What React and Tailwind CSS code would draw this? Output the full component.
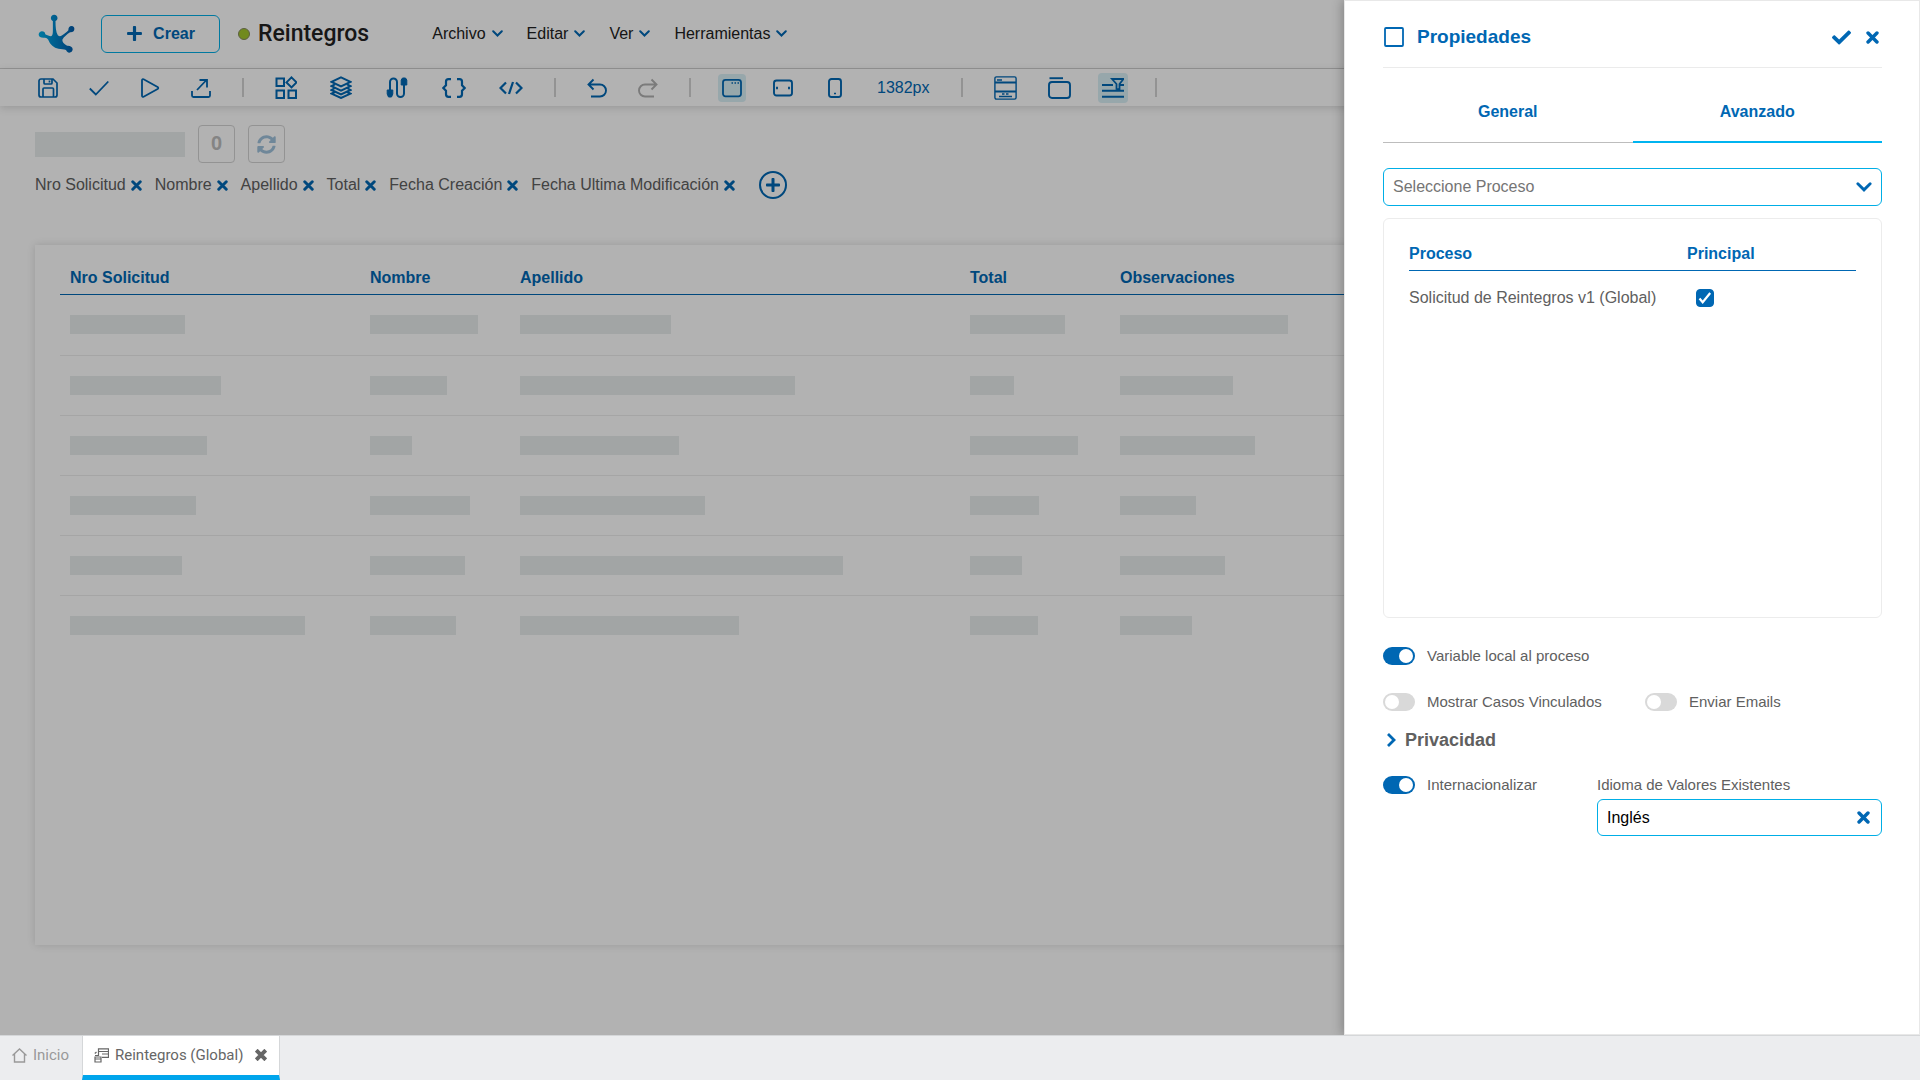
import React, { useState } from "react";
import { FaPlus, FaCheck, FaSyncAlt } from "react-icons/fa";

function Svg({ children, w = 20, h = 20, sw = 2, vb, className = "" }) {
  return (
    <svg
      width={w}
      height={h}
      viewBox={vb || `0 0 ${w} ${h}`}
      fill="none"
      stroke="currentColor"
      strokeWidth={sw}
      className={`block shrink-0 ${className}`}
      aria-hidden="true"
    >
      {children}
    </svg>
  );
}

const Cross = ({ size = 11 }) => (
  <Svg w={size} h={size} vb="0 0 12 12" sw={3.2}>
    <path d="M1.900 1.900l8.200 8.200M10.100 1.900l-8.200 8.200" strokeLinecap="round" />
  </Svg>
);

const ChevronDown = ({ w = 11, h = 7, sw = 2 }) => (
  <Svg w={w} h={h} vb="0 0 11 7" sw={sw}>
    <path d="M1.200 1.200l4.300 4.300 4.300-4.300" strokeLinecap="round" />
  </Svg>
);

const Logo = () => (
  <svg width="37" height="39" viewBox="112 42 112 118" className="block shrink-0" aria-hidden="true">
    <defs>
      <linearGradient id="logoFill" x1="0" y1="0" x2="1" y2="0">
        <stop offset="0" stopColor="#00aee6" />
        <stop offset="0.55" stopColor="#007fc6" />
        <stop offset="1" stopColor="#0059a8" />
      </linearGradient>
    </defs>
    <path
      fill="url(#logoFill)"
      d="M161 44c6 0 10 5 10 10 0 4-2 8-6 9 0 18 1 33 7 43 4 4 8 4 12 1 8-5 14-10 20-16-1-7 3-13 10-13 5 0 9 5 8 10 0 6-6 10-13 9-9 6-19 14-23 22-2 6 4 13 14 19 8-1 17 3 17 11 0 6-5 10-10 10-5 0-9-4-10-8-7-3-15-3-23-4-14-2-25-12-31-27-3-5-7-7-12-6-9 1-17-3-17-10 0-6 5-10 10-10 6 0 10 4 10 9 6 3 12 6 17 6 6-1 6-9 6-20V63c-4-1-6-5-6-9 0-5 4-10 10-10z"
    />
  </svg>
);

const SaveIcon = () => (
  <Svg sw={1.7}>
    <path d="M1 3a2 2 0 012-2h12l4 4v12a2 2 0 01-2 2H3a2 2 0 01-2-2z" />
    <path d="M6 1v4a1 1 0 001 1h6a1 1 0 001-1V1M11.5 2.5v2M5 19v-8a1 1 0 011-1h8.500a1 1 0 011 1v8" />
  </Svg>
);
const CheckIcon = () => (
  <Svg sw={1.8}>
    <path d="M.8 10.500l6 6L19.300 3.500" />
  </Svg>
);
const PlayIcon = () => (
  <Svg sw={1.8}>
    <path d="M2 2.200c0-1 .8-1.300 1.600-.9l14 7.700c.9.600.9 1.400 0 2l-14 7.700c-.8.400-1.600.1-1.600-.9z" />
  </Svg>
);
const ExportIcon = () => (
  <Svg sw={1.8}>
    <path d="M1 13v4.500a1.500 1.500 0 001.500 1.500h15a1.500 1.500 0 001.500-1.500V13M6 12L15.500 2M8.500 2H16v7.500" />
  </Svg>
);
const BlocksIcon = () => (
  <Svg w={22} h={23} sw={2}>
    <path d="M1.500 2.500H9V10H1.500zM1.500 14.500H9V22H1.500zM13.500 14.500H21V22h-7.500zM16.500 1.400l5 5-5 5-5-5z" />
  </Svg>
);
const LayersIcon = () => (
  <Svg w={22} h={23} sw={2}>
    <path d="M11 1.300l9.500 4.600L11 10.500 1.500 5.900z" />
    <path d="M5 8.300L1.500 10.100 11 14.700l9.500-4.600L17 8.300" />
    <path d="M5 12L1.500 14 11 18.400l9.500-4.400L17 12" />
    <path d="M5 16l-3.500 1.700L11 22l9.500-4.300L17 16" />
  </Svg>
);
const CableIcon = () => (
  <Svg w={24} h={22} sw={2}>
    <path d="M5 14V5a3.500 3.500 0 017 0v11.500a3.500 3.500 0 007 0V8" />
    <path d="M2.200 13h5.600v4l-1.300 3h-3l-1.300-3zM16.200 3l1.300-2h3l1.300 2v5h-5.600z" fill="currentColor" strokeWidth="1" />
  </Svg>
);
const BracesIcon = () => (
  <Svg w={24} h={20} sw={2.2}>
    <path d="M9 1.200H6.500A2.500 2.500 0 004 3.700v3.500L1.300 10 4 12.800v3.500a2.500 2.500 0 002.500 2.500H9M15 1.200h2.500A2.500 2.500 0 0120 3.700v3.500l2.700 2.800-2.700 2.800v3.500a2.500 2.500 0 01-2.500 2.500H15" />
  </Svg>
);
const CodeIcon = () => (
  <Svg w={24} h={20} sw={2.2}>
    <path d="M7 4.500L1.500 10 7 15.500M17 4.500l5.500 5.500-5.500 5.500M14 4l-4 12" />
  </Svg>
);
const UndoIcon = ({ flip }) => (
  <Svg sw={1.9} className={flip ? "-scale-x-100" : ""}>
    <path d="M6.500 1.500L1.500 6.500l5 5M1.500 6.500H13a6 6 0 010 12H4" />
  </Svg>
);
const WindowIcon = () => (
  <Svg sw={1.8}>
    <rect x="1" y="1.800" width="18" height="16.500" rx="2.500" />
    <path d="M9.500 5h1.500M12.500 5H14M15.500 5H17" strokeWidth="1.500" />
  </Svg>
);
const TabletIcon = () => (
  <Svg sw={1.9}>
    <rect x="1" y="2.500" width="18" height="15" rx="2.500" />
    <path d="M4 8.800v2.400M16 8.800v2.400" />
  </Svg>
);
const PhoneIcon = () => (
  <Svg w={22} h={20} sw={1.900}>
    <rect x="5" y="1" width="12" height="18" rx="2.500" />
    <path d="M10 15.500h2" strokeWidth="1.500" />
  </Svg>
);
const FormIcon = () => (
  <Svg w={23} h={24} sw={1.4}>
    <rect x="0.900" y="0.900" width="21.200" height="22.200" rx="1.500" />
    <path d="M1 6.500h21M1 15.500h21" strokeWidth="1.800" />
    <path d="M3 4h5M8 18h2.500M12 18h2.500M5 20.500h13" strokeWidth="1.500" />
  </Svg>
);
const FolderIcon = () => (
  <Svg w={23} h={22} sw={1.900}>
    <rect x="1" y="5" width="21" height="16" rx="3" />
    <path d="M1.500 1.200h13.500" />
  </Svg>
);
const FilterIcon = () => (
  <Svg w={22} h={20} sw={1.900}>
    <path d="M0 7h11M17.500 7H22M0 12.800h22M0 18.800h22" />
    <path d="M10 1h11.500l-4 5v5.500l-3-.5V6z" strokeWidth="1.800" />
  </Svg>
);

const Divider = () => <span className="h-[19px] w-0.5 shrink-0 bg-[#d3d3d3]" />;

const Tool = ({ label, children, className = "" }) => (
  <button type="button" aria-label={label} className={className}>
    {children}
  </button>
);

const MENUS = ["Archivo", "Editar", "Ver", "Herramientas"];
const TAGS = ["Nro Solicitud", "Nombre", "Apellido", "Total", "Fecha Creación", "Fecha Ultima Modificación"];
const COLUMNS = ["Nro Solicitud", "Nombre", "Apellido", "Total", "Observaciones"];
const ROWS = [
  [115, 108, 151, 95, 168],
  [151, 77, 275, 44, 113],
  [137, 42, 159, 108, 135],
  [126, 100, 185, 69, 76],
  [112, 95, 323, 52, 105],
  [235, 86, 219, 68, 72],
];

function TopBar() {
  return (
    <header className="flex h-[69px] items-center border-b border-[#d3d3d3] bg-white pb-px pl-[38px]">
      <Logo />
      <button
        type="button"
        className="ml-[26px] flex h-[38px] w-[119px] items-center justify-center gap-2.5 rounded-md border border-[#00aee6] font-bold text-[#0067b3]"
      >
        <FaPlus size={17} />
        Crear
      </button>
      <span className="ml-[18px] size-3 rounded-full border border-[#85895f] bg-[#a3c62c]" />
      <h1 className="ml-2 font-['Roboto',sans-serif] text-[23px] leading-8 font-medium text-[#222]">Reintegros</h1>
      <nav className="ml-[63px] flex gap-6 text-[#222]">
        {MENUS.map((m) => (
          <button key={m} type="button" className="flex items-center gap-1.5">
            {m}
            <span className="text-[#0067b3]">
              <ChevronDown />
            </span>
          </button>
        ))}
      </nav>
    </header>
  );
}

function Toolbar() {
  return (
    <div className="flex h-[37px] items-center gap-[31px] bg-white pl-[38px] text-[#0067b3] shadow-[0_2px_8px_rgba(0,0,0,0.15)]">
      <Tool label="Guardar"><SaveIcon /></Tool>
      <Tool label="Validar"><CheckIcon /></Tool>
      <Tool label="Ejecutar"><PlayIcon /></Tool>
      <Tool label="Publicar"><ExportIcon /></Tool>
      <Divider />
      <div className="flex items-center gap-[33px]">
        <Tool label="Componentes"><BlocksIcon /></Tool>
        <Tool label="Capas"><LayersIcon /></Tool>
        <Tool label="Relaciones"><CableIcon /></Tool>
        <Tool label="Variables"><BracesIcon /></Tool>
        <Tool label="Código"><CodeIcon /></Tool>
      </div>
      <Divider />
      <Tool label="Deshacer"><UndoIcon /></Tool>
      <Tool label="Rehacer" className="text-[#b0b0b0]"><UndoIcon flip /></Tool>
      <Divider />
      <Tool label="Escritorio" className="-mx-1 rounded-sm bg-[#d9eff5] p-1"><WindowIcon /></Tool>
      <Tool label="Tableta"><TabletIcon /></Tool>
      <Tool label="Teléfono"><PhoneIcon /></Tool>
      <span>1382px</span>
      <Divider />
      <Tool label="Formulario"><FormIcon /></Tool>
      <Tool label="Carpeta"><FolderIcon /></Tool>
      <Tool label="Filtros" className="-mx-1 rounded-sm bg-[#d9eff5] px-1 py-[5px]"><FilterIcon /></Tool>
      <Divider />
    </div>
  );
}

function Workspace() {
  return (
    <section className="flex min-h-0 flex-1 flex-col px-[35px] pt-[19px] pb-[90px] text-[#606060]">
      <div className="flex items-center gap-[13px]">
        <span className="h-[25px] w-[150px] bg-[#e9edec]" />
        <span className="flex h-[38px] w-[37px] items-center justify-center rounded-sm border border-[#d3d3d3] pb-0.5 text-xl font-bold text-[#bdbdbd]">
          0
        </span>
        <button
          type="button"
          aria-label="Actualizar"
          className="flex h-[38px] w-[37px] items-center justify-center rounded-sm border border-[#d3d3d3] text-[#a0c2dc]"
        >
          <FaSyncAlt size={19} />
        </button>
      </div>
      <div className="mt-2 flex items-center">
        <ul className="flex gap-[13px]">
          {TAGS.map((t) => (
            <li key={t} className="flex items-center gap-[5px]">
              {t}
              <button type="button" aria-label={`Quitar ${t}`} className="text-[#0067b3]">
                <Cross />
              </button>
            </li>
          ))}
        </ul>
        <button
          type="button"
          aria-label="Agregar"
          className="ml-6 flex size-7 items-center justify-center rounded-full border-2 border-[#0067b3] text-[#0067b3]"
        >
          <FaPlus size={16} />
        </button>
      </div>
      <div className="mt-[46px] flex-1 bg-white px-[25px] pt-[15px] shadow-[0_0_8px_rgba(0,0,0,0.14)]">
        <table className="w-full table-fixed border-collapse text-left">
          <colgroup>
            <col className="w-[310px]" />
            <col className="w-[150px]" />
            <col className="w-[450px]" />
            <col className="w-[150px]" />
            <col />
          </colgroup>
          <thead>
            <tr className="border-b border-[#0067b3] text-[#0067b3]">
              {COLUMNS.map((c) => (
                <th key={c} className="h-[34px] p-0 pt-[3px] font-bold first:pl-2.5">{c}</th>
              ))}
            </tr>
          </thead>
          <tbody>
            {ROWS.map((r, i) => (
              <tr key={i} className="h-[60px] border-b border-[#ececec] first:h-[61px] last:border-0">
                {r.map((w, j) => (
                  <td key={j} className="p-0 first:pl-2.5">
                    <div className="h-[19px] bg-[#e9edec]" style={{ width: w }} />
                  </td>
                ))}
              </tr>
            ))}
          </tbody>
        </table>
      </div>
    </section>
  );
}

function Toggle({ label, initial = false }) {
  const [on, setOn] = useState(initial);
  return (
    <label className="flex items-center gap-3">
      <input
        type="checkbox"
        role="switch"
        checked={on}
        onChange={() => setOn(!on)}
        className="h-[18px] w-8 appearance-none rounded-full bg-[#d9d9d9] p-0.5 before:block before:size-3.5 before:rounded-full before:bg-white checked:bg-[#0067b3] checked:before:ml-3.5"
      />
      {label}
    </label>
  );
}

function PropertiesPanel() {
  const [main, setMain] = useState(true);
  return (
    <aside className="absolute inset-y-0 right-0 w-[576px] border border-[#e8e8e8] bg-white pr-[37px] pl-[38px] text-[15px] leading-5 text-[#606060] shadow-[-2px_0_10px_rgba(0,0,0,0.25)]">
      <header className="flex h-[67px] items-center border-b border-[#ebebeb] pt-1.5 text-[#0067b3]">
        <Svg w={22} h={22} sw={1.8}>
          <rect x="2" y="2" width="18" height="18" rx="1" />
        </Svg>
        <h2 className="ml-3 text-[19px] leading-6 font-bold">Propiedades</h2>
        <button type="button" aria-label="Aceptar" className="ml-auto">
          <FaCheck size={19} />
        </button>
        <button type="button" aria-label="Cerrar" className="mr-[3px] ml-[15px]">
          <Cross size={13} />
        </button>
      </header>
      <div role="tablist" className="grid grid-cols-2 text-base leading-6 font-bold text-[#0067b3]">
        <button type="button" role="tab" aria-selected="false" className="h-[75px] border-b border-[#bdbdbd] pt-3.5">
          General
        </button>
        <button type="button" role="tab" aria-selected="true" className="h-[75px] border-b-2 border-[#00b4f0] pt-3.5">
          Avanzado
        </button>
      </div>
      <div className="relative mt-[25px]">
        <select
          aria-label="Seleccione Proceso"
          className="h-[38px] w-full appearance-none rounded-md border border-[#00aee6] bg-white px-[9px] text-base text-[#757575]"
        >
          <option>Seleccione Proceso</option>
        </select>
        <span className="pointer-events-none absolute inset-y-0 right-2.5 flex items-center text-[#0067b3]">
          <ChevronDown w={16} h={10} sw={2} />
        </span>
      </div>
      <div className="mt-3 min-h-[400px] rounded-md border border-[#ececec] px-[25px] pt-[17px] text-base">
        <table className="w-full table-fixed border-collapse text-left">
          <colgroup>
            <col className="w-[278px]" />
            <col />
          </colgroup>
          <thead>
            <tr className="border-b border-[#0067b3] text-[#0067b3]">
              <th className="h-[34px] p-0 pt-[3px] font-bold">Proceso</th>
              <th className="h-[34px] p-0 pt-[3px] font-bold">Principal</th>
            </tr>
          </thead>
          <tbody>
            <tr className="h-14">
              <td className="p-0">Solicitud de Reintegros v1 (Global)</td>
              <td className="p-0 pl-[9px]">
                <span className="relative block size-[18px]">
                  <input
                    type="checkbox"
                    aria-label="Principal"
                    checked={main}
                    onChange={() => setMain(!main)}
                    className="block size-[18px] appearance-none rounded-sm border border-[#0067b3] checked:bg-[#0067b3]"
                  />
                  <span className="pointer-events-none absolute inset-0 text-white">
                    <Svg w={18} h={18} sw={2.2}>
                      <path d="M3.500 9.500l3.200 3.800L14.200 4" />
                    </Svg>
                  </span>
                </span>
              </td>
            </tr>
          </tbody>
        </table>
      </div>
      <div className="mt-7">
        <Toggle label="Variable local al proceso" initial />
      </div>
      <div className="mt-[26px] grid grid-cols-[262px_1fr]">
        <Toggle label="Mostrar Casos Vinculados" />
        <Toggle label="Enviar Emails" />
      </div>
      <button type="button" className="mt-4 flex items-center gap-2 pl-[3px] text-lg leading-6 font-bold">
        <Svg w={11} h={16} sw={2.8} className="text-[#0067b3]">
          <path d="M2 2l6 6-6 6" />
        </Svg>
        Privacidad
      </button>
      <div className="mt-[23px] grid grid-cols-[214px_1fr] items-start">
        <Toggle label="Internacionalizar" initial />
        <div>
          <label htmlFor="idioma" className="block">Idioma de Valores Existentes</label>
          <div className="relative mt-1">
            <input
              id="idioma"
              type="text"
              defaultValue="Inglés"
              className="block h-[37px] w-full rounded-md border border-[#00aee6] px-[9px] text-base text-black"
            />
            <button
              type="button"
              aria-label="Limpiar idioma"
              className="absolute inset-y-0 right-3 flex items-center text-[#0067b3]"
            >
              <Cross size={13} />
            </button>
          </div>
        </div>
      </div>
    </aside>
  );
}

function TaskBar() {
  return (
    <footer className="flex h-[45px] border-t border-[#d5d7d9] bg-[#ecedef] font-['Roboto',sans-serif] text-[15px] leading-6">
      <button type="button" className="flex w-[82px] items-center gap-1.5 pb-1.5 pl-3 text-[#999]">
        <Svg w={15} h={15} sw={1.4}>
          <path d="M.5 7.500L7.500 1l7 6.500M2.500 6v8h10V6" />
        </Svg>
        Inicio
      </button>
      <div className="flex items-center border-x border-b-[5px] border-x-[#d5d7d9] border-b-[#00a5ec] bg-white pr-3 pb-px pl-[11px] text-[#666]">
        <Svg w={15} h={15} sw={1.2}>
          <path d="M4.500 8V.8h10v8.500H8M4.500 3.500h10M8 6h6.500M1 9h6v5H1zM1 11h6M.8 5.500L2.500 4M1 7.500h3" />
        </Svg>
        <a href="#reintegros" className="ml-1.5">Reintegros (Global)</a>
        <button type="button" aria-label="Cerrar pestaña" className="ml-3">
          <Svg w={12} h={12} sw={4}>
            <path d="M1.200 1.200l9.600 9.600M10.800 1.200l-9.600 9.600" />
          </Svg>
        </button>
      </div>
    </footer>
  );
}

export default function App() {
  return (
    <div className="flex h-screen flex-col overflow-hidden bg-white font-['Liberation_Sans',Arial,sans-serif] text-base">
      <main className="relative flex min-h-0 flex-1 flex-col overflow-hidden">
        <TopBar />
        <Toolbar />
        <Workspace />
        <div className="absolute inset-0 bg-black/30" />
        <PropertiesPanel />
      </main>
      <TaskBar />
    </div>
  );
}
